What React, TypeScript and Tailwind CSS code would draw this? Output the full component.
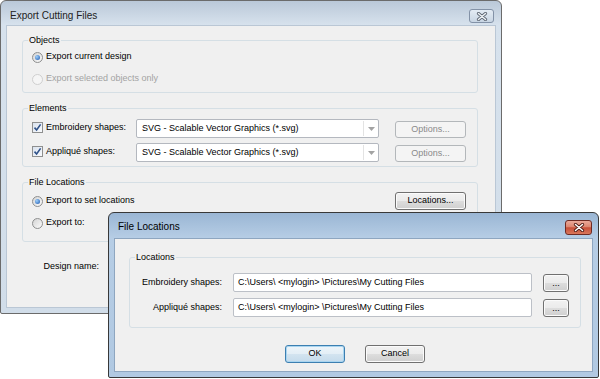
import React from "react";

function Radio({ checked, disabled }: { checked?: boolean; disabled?: boolean }) {
  return (
    <span
      className={
        disabled
          ? "flex h-[11px] w-[11px] shrink-0 items-center justify-center rounded-full border border-[#cfcfcf] bg-[#f5f5f5]"
          : "flex h-[11px] w-[11px] shrink-0 items-center justify-center rounded-full border border-[#8e8f8f] bg-[linear-gradient(135deg,#d4d4d4,#fbfbfb)]"
      }
    >
      {checked && (
        <span className="h-[5px] w-[5px] rounded-full bg-[radial-gradient(circle_at_35%_35%,#9fd0fb,#1b56ad)]" />
      )}
    </span>
  );
}

function Check() {
  return (
    <span className="flex h-[11px] w-[11px] shrink-0 items-center justify-center border border-[#8e8f8f] bg-[linear-gradient(135deg,#d9e2ee,#fafbfd)]">
      <svg width="9" height="9" viewBox="0 0 9 9">
        <path d="M1.5 4.6 L3.6 7 L7.6 1.4" fill="none" stroke="#2e5189" strokeWidth="1.6" />
      </svg>
    </span>
  );
}

function Group({ title, className, children }: { title: string; className?: string; children: React.ReactNode }) {
  return (
    <div className={"relative rounded-[3px] border border-[#d5dfe5] " + (className ?? "")}>
      <span className="absolute left-[5px] top-[-7px] bg-[#f0f0f0] px-[1px] leading-[12px] text-black">{title}</span>
      {children}
    </div>
  );
}

const stdBtn =
  "flex items-center justify-center rounded-[3px] border border-[#707070] bg-[linear-gradient(to_bottom,#f2f2f2_0%,#ebebeb_50%,#dddddd_51%,#cfcfcf_100%)] shadow-[inset_0_0_0_1px_#fbfbfb] text-black";

const disBtn =
  "flex items-center justify-center rounded-[3px] border border-[#b3b7ba] bg-[#f4f4f4] text-[#8a8a8a]";

function Combo() {
  return (
    <div className="flex h-[19px] w-[243px] shrink-0 items-stretch rounded-[2px] border border-[#b4b8bf] bg-white">
      <span className="flex flex-1 items-center pl-[5px] text-black">SVG - Scalable Vector Graphics (*.svg)</span>
      <span className="my-[1px] flex w-[15px] items-center justify-center border-l border-[#e3e3e3]">
        <svg width="7" height="4" viewBox="0 0 7 4">
          <path d="M0 0 H7 L3.5 4 Z" fill="#a3a3a3" />
        </svg>
      </span>
    </div>
  );
}

function XGlyph({ dark, light }: { dark: string; light: string }) {
  return (
    <svg width="12" height="9" viewBox="0 0 12 9">
      <path d="M2.5 1.5 L9.5 7.5 M9.5 1.5 L2.5 7.5" stroke={dark} strokeWidth="3.2" strokeLinecap="round" />
      <path d="M2.5 1.5 L9.5 7.5 M9.5 1.5 L2.5 7.5" stroke={light} strokeWidth="1.5" strokeLinecap="round" />
    </svg>
  );
}

const path = "C:\\Users\\ <mylogin> \\Pictures\\My Cutting Files";

export default function App() {
  return (
    <div className="relative h-[379px] w-[600px] overflow-hidden bg-white font-['Liberation_Sans',Arial,sans-serif] text-[9px] text-black">
      {/* Export Cutting Files window */}
      <div className="absolute left-0 top-0 flex h-[314px] w-[502px] flex-col rounded-t-[6px] rounded-b-[2px] border border-[#6b6b6b] bg-[linear-gradient(to_bottom,#bac8d8_0px,#d7e2ed_24px,#d1dde9_100%)]">
        <div className="flex h-[24px] shrink-0 items-start justify-between pl-[9px] pr-[7px] pt-[8px]">
          <span className="text-[10px] leading-[14px] text-[#222]">Export Cutting Files</span>
          <div className="flex h-[14px] w-[25px] items-center justify-center rounded-[3px] border border-[#8392a7] bg-[linear-gradient(to_bottom,#e4ecf4,#c8d5e3)]">
            <XGlyph dark="#5d6672" light="#eef2f6" />
          </div>
        </div>
        <div className="mx-[5px] mb-[5px] flex flex-1 flex-col gap-[15px] border border-[#bac7d5] bg-[#f0f0f0] pl-[15px] pr-[17px] pt-[14px]">
          <Group title="Objects" className="flex flex-col gap-[2px] pb-[3px] pl-[9px] pt-[6px]">
            <div className="flex h-[20px] items-center gap-[3px]">
              <Radio checked />
              <span>Export current design</span>
            </div>
            <div className="flex h-[20px] items-center gap-[3px] text-[#a3a3a3]">
              <Radio disabled />
              <span>Export selected objects only</span>
            </div>
          </Group>

          <Group title="Elements" className="flex flex-col gap-[5px] pb-[4px] pl-[9px] pr-[11px] pt-[10px]">
            {["Embroidery shapes:", "Appliqué shapes:"].map((l) => (
              <div key={l} className="flex h-[19px] items-start">
                <div className="mt-[3px] flex w-[104px] items-center gap-[3px]">
                  <Check />
                  <span className="leading-[11px]">{l}</span>
                </div>
                <Combo />
                <div className={disBtn + " ml-auto mt-[2px] h-[17px] w-[71px]"}>Options...</div>
              </div>
            ))}
          </Group>

          <Group title="File Locations" className="flex flex-col gap-[2px] pb-[8px] pl-[9px] pr-[11px] pt-[8px]">
            <div className="flex h-[20px] items-center">
              <div className="flex items-center gap-[3px]">
                <Radio checked />
                <span>Export to set locations</span>
              </div>
              <div className={stdBtn + " ml-auto h-[18px] w-[71px]"}>Locations...</div>
            </div>
            <div className="flex h-[20px] items-center">
              <div className="flex items-center gap-[3px]">
                <Radio />
                <span>Export to:</span>
              </div>
            </div>
          </Group>

          <div className="flex h-[20px] items-center">
            <span className="w-[77px] text-right">Design name:</span>
          </div>
        </div>
      </div>

      {/* File Locations window */}
      <div className="absolute left-[108px] top-[212px] flex h-[166px] w-[491px] flex-col rounded-t-[6px] rounded-b-[2px] border border-[#383838] bg-[linear-gradient(to_bottom,#9ab6d4_0px,#b6cde5_25px,#b1c9e2_100%)]">
        <div className="flex h-[25px] shrink-0 items-start justify-between pl-[9px] pr-[6px] pt-[7px]">
          <span className="text-[10px] leading-[14px] text-black">File Locations</span>
          <div className="flex h-[15px] w-[27px] items-center justify-center rounded-[3px] border border-[#6e2b24] bg-[linear-gradient(to_bottom,#eaa99a_0%,#dd8670_45%,#c74f39_52%,#d9775b_100%)]">
            <XGlyph dark="#4d1c16" light="#ffffff" />
          </div>
        </div>
        <div className="mx-[5px] mb-[5px] flex flex-1 flex-col border border-[#8ea6c0] bg-[#f0f0f0] pl-[14px] pr-[11px] pt-[18px]">
          <Group title="Locations" className="flex flex-col gap-[6px] pb-[10px] pt-[15px]">
            {["Embroidery shapes:", "Appliqué shapes:"].map((l) => (
              <div key={l} className="flex h-[19px] items-center">
                <span className="w-[92px] text-right">{l}</span>
                <div className="ml-[11px] flex h-[19px] w-[299px] items-center rounded-[2px] border border-[#bcc0c7] bg-white pl-[4px]">
                  {path}
                </div>
                <div className={stdBtn + " ml-[11px] h-[18px] w-[26px] leading-[10px]"}>...</div>
              </div>
            ))}
          </Group>
          <div className="mt-[17px] flex justify-center gap-[20px]">
            <div className="flex h-[18px] w-[60px] items-center justify-center rounded-[3px] border border-[#3c7fb1] bg-[linear-gradient(to_bottom,#eef5fa_0%,#e3eef6_50%,#d3e4f0_51%,#c5dbec_100%)] shadow-[inset_0_0_0_1px_#a9d5f0]">
              OK
            </div>
            <div className={stdBtn + " h-[18px] w-[60px]"}>Cancel</div>
          </div>
        </div>
      </div>
    </div>
  );
}
